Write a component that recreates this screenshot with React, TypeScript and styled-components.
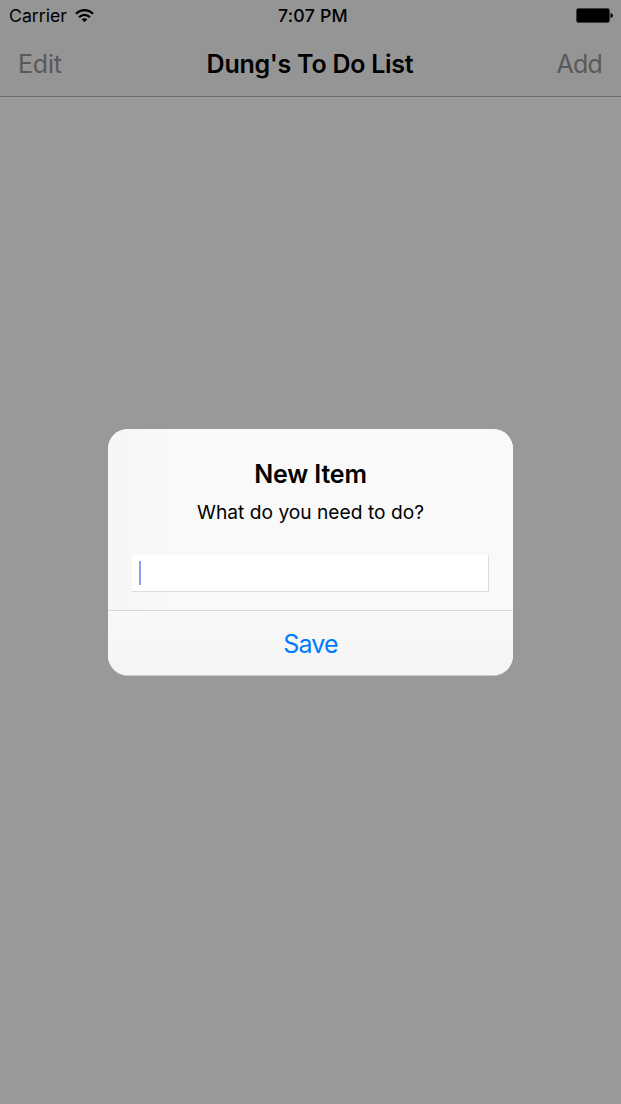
import React from "react";
import styled, { createGlobalStyle } from "styled-components";

const Global = createGlobalStyle`
  * { box-sizing: border-box; }
  body { margin: 0; background: #999; font-family: Inter, "Liberation Sans", sans-serif; color: #000; }
  button { font-family: inherit; border: 0; background: none; padding: 0; }
`;

const Screen = styled.div`
  height: 1104px;
  width: 621px;
  display: flex;
  flex-direction: column;
  background: #999;
`;

const StatusBar = styled.header`
  height: 32px;
  display: grid;
  grid-template-columns: 1fr auto 1fr;
  align-items: center;
  padding: 0 8px 1px 9px;
  font-size: 17.7px;
  background: #959595;
`;

const Carrier = styled.div`
  display: flex;
  align-items: center;
  gap: 8px;
`;

const Clock = styled.div`
  font-weight: 550;
  letter-spacing: 0.25px;
  padding-left: 4px;
`;

const Battery = styled.div`
  display: flex;
  justify-content: flex-end;
`;

const NavBar = styled.nav`
  height: 65px;
  display: grid;
  grid-template-columns: 1fr auto 1fr;
  align-items: center;
  padding: 0 19px 0 18px;
  border-bottom: 1px solid #6b6b6d;
  background: #959595;
`;

const NavButton = styled.button<{ $end?: boolean }>`
  justify-self: ${(p) => (p.$end ? "end" : "start")};
  font-size: 25px;
  letter-spacing: ${(p) => (p.$end ? "-0.8px" : "-0.2px")};
  color: #595959;
`;

const Title = styled.h1`
  margin: 0;
  font-size: 25px;
  font-weight: 580;
  letter-spacing: -0.26px;
`;

const Main = styled.main`
  flex: 1;
  padding-top: 332px;
`;

const Dialog = styled.section`
  width: 405px;
  height: 246px;
  margin: 0 auto;
  border-radius: 20px;
  overflow: hidden;
  background: #f9f9f9;
  box-shadow: 0 1px #c6c9c7;
  display: flex;
  flex-direction: column;
`;

const DialogBody = styled.div`
  flex: 1;
  padding: 28px 24px 0;
  text-align: center;
  background: linear-gradient(to right, #f6f6f6, #f9f9f9 14%);
`;

const DialogTitle = styled.h2`
  margin: 0;
  font-size: 25px;
  line-height: 34px;
  font-weight: 600;
  letter-spacing: -0.15px;
`;

const Message = styled.p`
  margin: 7px 0 0;
  font-size: 19.2px;
  line-height: 28px;
`;

const Field = styled.div`
  height: 37px;
  margin-top: 29px;
  padding: 6px 7px;
  background: #fff;
  border-right: 1px solid #ddd;
  border-bottom: 1px solid #ddd;
`;

const Caret = styled.div`
  width: 2px;
  height: 24px;
  background: #919ff5;
`;

const SaveButton = styled.button`
  height: 65px;
  padding-top: 2px;
  border-top: 1px solid #d5d6d6;
  background: linear-gradient(#f9f9f9, #f5f5f5);
  color: #007aff;
  font-size: 25px;
  letter-spacing: -0.8px;
`;

export default function App() {
  return (
    <Screen>
      <Global />
      <StatusBar>
        <Carrier>
          <span>Carrier</span>
          <svg width="19" height="14" viewBox="0 0 19 14" fill="none" stroke="#000" strokeWidth="2.3">
            <path d="M0.9 4.6 Q9.5 -2.3 18.1 4.6" />
            <path d="M4 8.2 Q9.5 3.6 15 8.2" />
            <path d="M6.6 10.3 Q9.5 8.2 12.4 10.3 L9.5 13.3Z" fill="#000" stroke="none" />
          </svg>
        </Carrier>
        <Clock>7:07 PM</Clock>
        <Battery>
          <svg width="37" height="15" viewBox="0 0 37 15">
            <rect x="0.5" y="0.5" width="33" height="14" rx="2" stroke="#3d3d3d" />
            <path d="M34.5 5 Q37 5.5 37 7.5 Q37 9.5 34.5 10Z" />
          </svg>
        </Battery>
      </StatusBar>
      <NavBar>
        <NavButton>Edit</NavButton>
        <Title>Dung's To Do List</Title>
        <NavButton $end>Add</NavButton>
      </NavBar>
      <Main>
        <Dialog>
          <DialogBody>
            <DialogTitle>New Item</DialogTitle>
            <Message>What do you need to do?</Message>
            <Field><Caret /></Field>
          </DialogBody>
          <SaveButton>Save</SaveButton>
        </Dialog>
      </Main>
    </Screen>
  );
}
